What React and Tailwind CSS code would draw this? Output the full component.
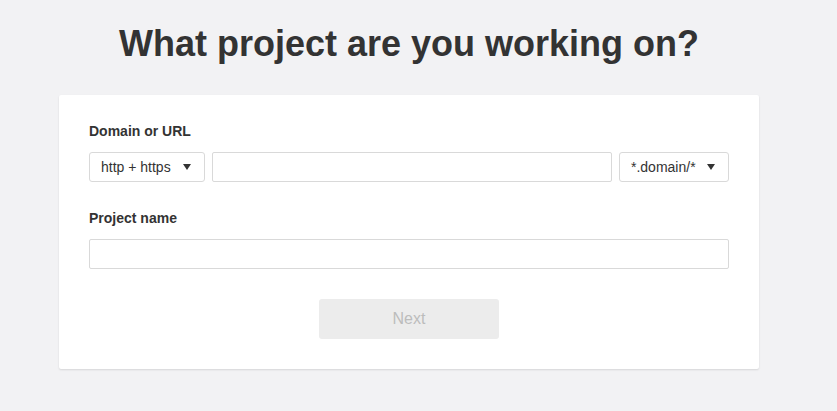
import React from "react";

const Caret = () => (
  <svg width="8" height="6" viewBox="0 0 8 6" className="fill-[#333]">
    <path d="M0 0h8L4 6z" />
  </svg>
);

const Select = ({ value, width }) => (
  <div
    className={`${width} h-[30px] flex items-center justify-between pl-[11px] pr-[13px] border border-[#d9d9d9] rounded-[3px] bg-white text-[14px] text-[#333]`}
  >
    <span>{value}</span>
    <Caret />
  </div>
);

export default function App() {
  return (
    <div className="min-h-[411px] bg-[#f2f2f4] font-['Liberation_Sans',Arial,sans-serif] text-[#333]">
      <div className="w-[700px] ml-[59px] pt-[23px]">
        <h1 className="text-center text-[36px] font-bold leading-[42px] text-[#333]">
          What project are you working on?
        </h1>
        <div className="mt-[30px] bg-white rounded-[2px] shadow-[0_1px_2px_rgba(0,0,0,0.12)] px-[30px] pt-[28px] pb-[30px]">
          <label className="block text-[14px] font-bold leading-[16px]">Domain or URL</label>
          <div className="mt-[13px] flex gap-[7px]">
            <Select value="http + https" width="w-[116px]" />
            <input className="flex-1 h-[30px] border border-[#d9d9d9] rounded-[2px] outline-none" />
            <Select value="*.domain/*" width="w-[110px]" />
          </div>
          <label className="block mt-[28px] text-[14px] font-bold leading-[16px]">Project name</label>
          <input className="mt-[13px] block w-full h-[30px] border border-[#d9d9d9] rounded-[2px] outline-none" />
          <div className="mt-[30px] flex justify-center">
            <button className="w-[180px] h-[40px] rounded-[3px] bg-[#ececec] text-[16px] text-[#bcbcbc]">
              Next
            </button>
          </div>
        </div>
      </div>
    </div>
  );
}
